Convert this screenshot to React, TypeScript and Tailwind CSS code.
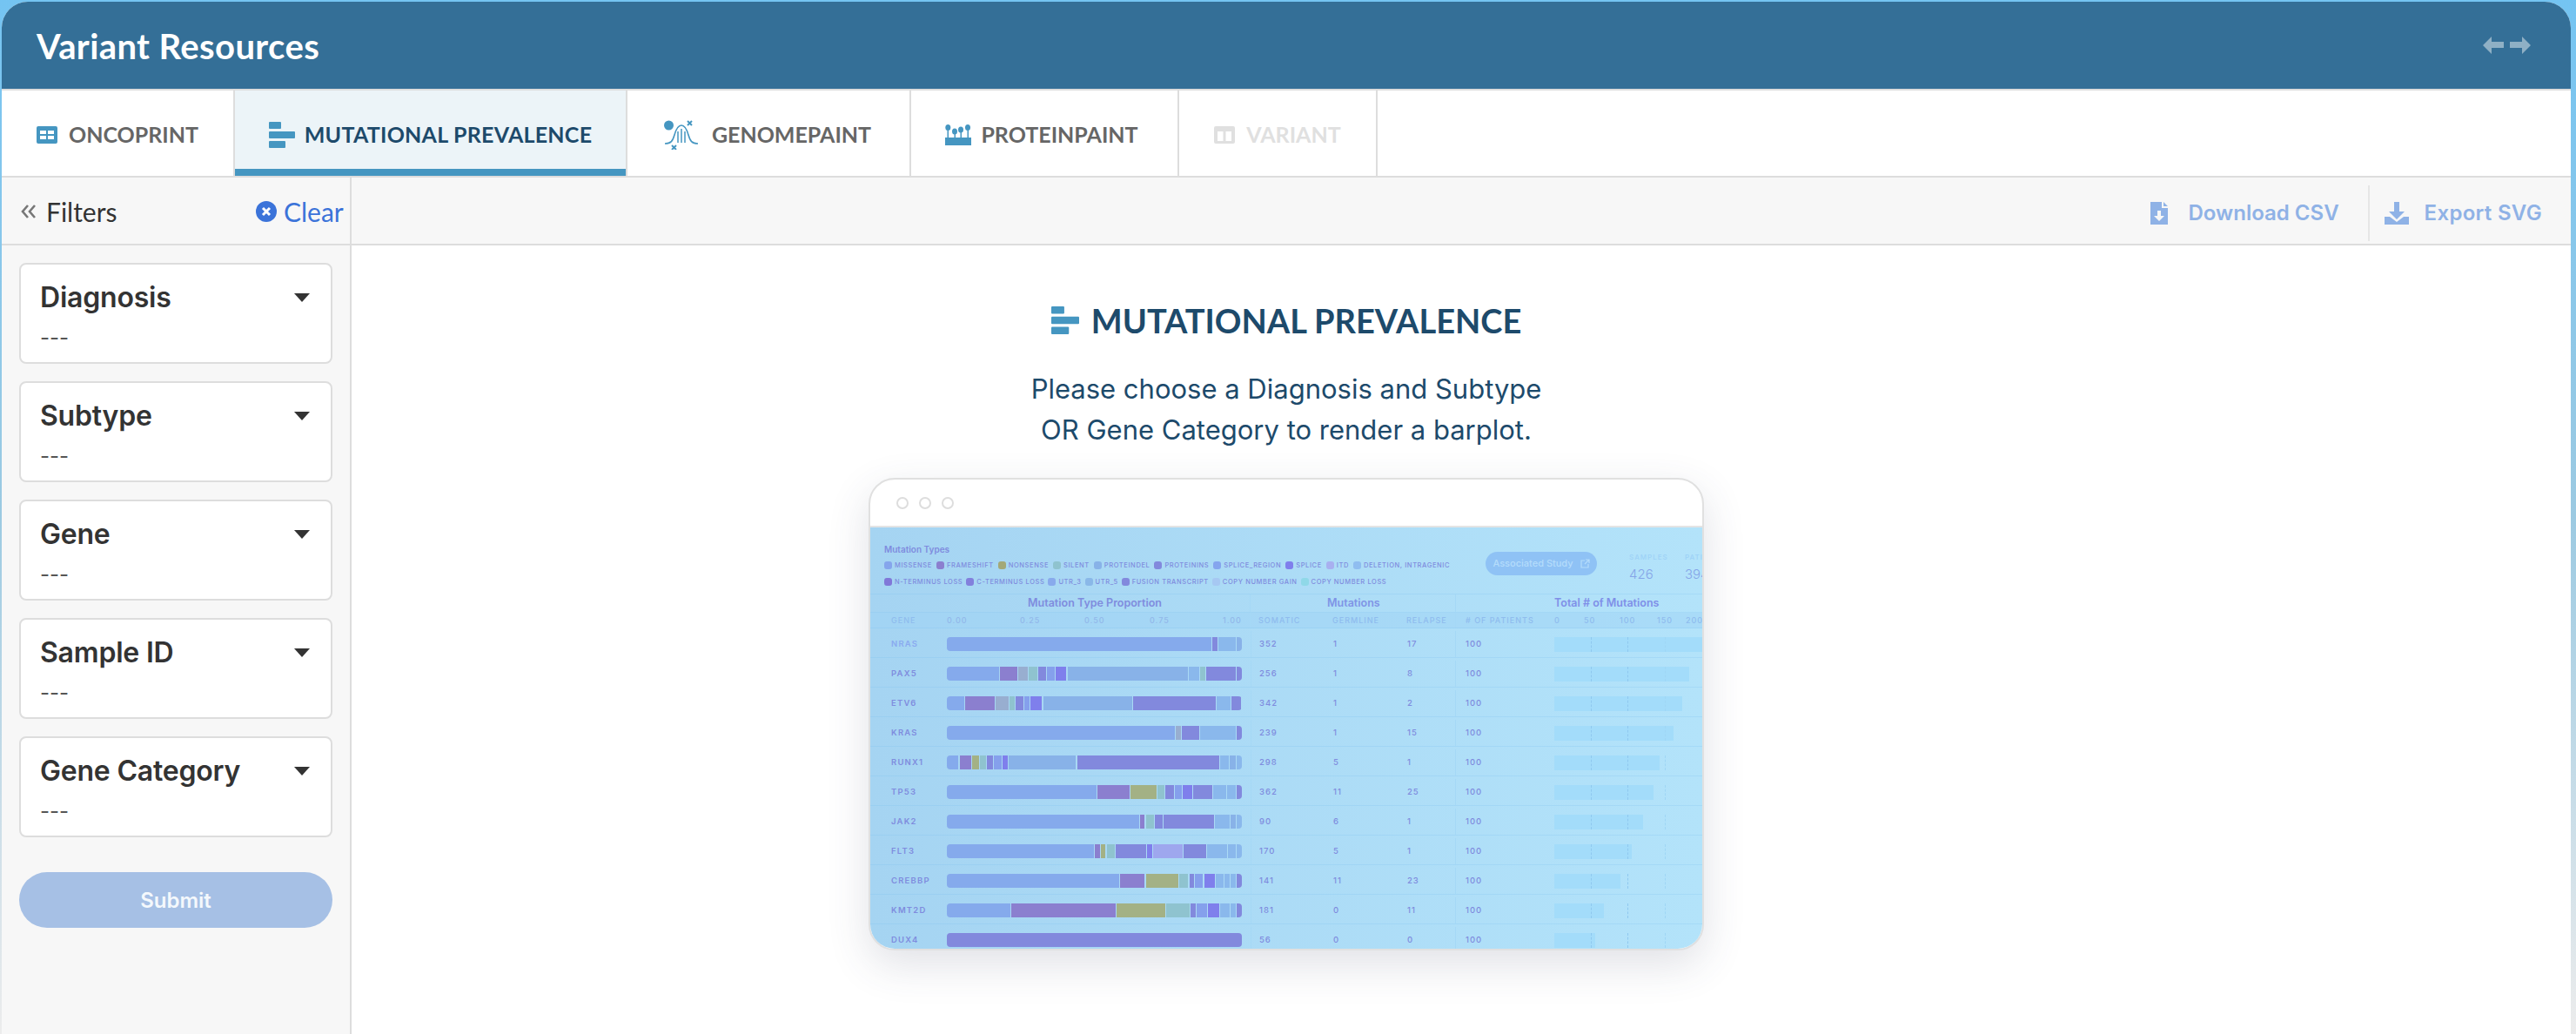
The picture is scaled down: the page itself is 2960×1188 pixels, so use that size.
import React from "react";

const c: Record<string, string> = {
  a: "#85aaec", f: "#8b7fcf", n: "#a3b185", g: "#98aed0", s: "#8fc3cf", p: "#8289dd",
  r: "#85a0ec", x: "#7f7fec", d: "#88b2e8", k: "#8ab8ec", i: "#9ea7ee",
};

type Seg = [string, number, number];
const rows: { gene: string; som: string; ger: string; rel: string; total: number; segs: Seg[] }[] = [
  { gene: "NRAS", som: "352", ger: "1", rel: "17", total: 1430, segs: [["a", 294, 1207], ["p", 1209, 1227], ["k", 1229, 1290], ["d", 1293, 1311]] },
  { gene: "PAX5", som: "256", ger: "1", rel: "8", total: 1387, segs: [["a", 294, 474], ["f", 477, 538], ["g", 541, 573], ["s", 576, 606], ["p", 609, 636], ["r", 639, 666], ["x", 669, 705], ["d", 710, 1125], ["k", 1128, 1164], ["s", 1167, 1185], ["p", 1188, 1290], ["p", 1293, 1311]] },
  { gene: "ETV6", som: "342", ger: "1", rel: "2", total: 1361, segs: [["a", 294, 355], ["f", 357, 459], ["g", 462, 507], ["s", 510, 528], ["p", 531, 558], ["r", 561, 579], ["x", 582, 621], ["d", 627, 933], ["p", 936, 1221], ["k", 1224, 1272], ["p", 1275, 1308]] },
  { gene: "KRAS", som: "239", ger: "1", rel: "15", total: 1333, segs: [["a", 294, 1080], ["g", 1083, 1101], ["p", 1104, 1164], ["k", 1167, 1290], ["p", 1293, 1311]] },
  { gene: "RUNX1", som: "298", ger: "5", rel: "1", total: 1285, segs: [["a", 294, 333], ["f", 339, 378], ["n", 381, 405], ["s", 408, 429], ["p", 432, 452], ["r", 456, 483], ["x", 486, 504], ["d", 507, 738], ["p", 744, 1233], ["k", 1236, 1266], ["d", 1269, 1290], ["k", 1293, 1311]] },
  { gene: "TP53", som: "362", ger: "11", rel: "25", total: 1263, segs: [["a", 294, 810], ["f", 813, 924], ["n", 927, 1017], ["s", 1020, 1044], ["p", 1047, 1076], ["r", 1079, 1104], ["x", 1107, 1140], ["p", 1143, 1209], ["k", 1212, 1257], ["k", 1260, 1290], ["p", 1293, 1311]] },
  { gene: "JAK2", som: "90", ger: "6", rel: "1", total: 1227, segs: [["a", 294, 957], ["f", 960, 975], ["s", 981, 1008], ["p", 1011, 1038], ["p", 1041, 1215], ["k", 1218, 1269], ["d", 1272, 1290], ["k", 1293, 1311]] },
  { gene: "FLT3", som: "170", ger: "5", rel: "1", total: 1188, segs: [["a", 294, 801], ["f", 804, 822], ["n", 825, 840], ["s", 846, 873], ["p", 876, 981], ["x", 984, 1002], ["i", 1005, 1107], ["p", 1110, 1188], ["k", 1191, 1260], ["k", 1263, 1290], ["k", 1293, 1311]] },
  { gene: "CREBBP", som: "141", ger: "11", rel: "23", total: 1148, segs: [["a", 294, 888], ["f", 891, 975], ["n", 981, 1092], ["s", 1095, 1125], ["p", 1131, 1146], ["r", 1149, 1176], ["x", 1182, 1218], ["k", 1221, 1248], ["k", 1251, 1269], ["k", 1272, 1290], ["p", 1293, 1311]] },
  { gene: "KMT2D", som: "181", ger: "0", rel: "11", total: 1092, segs: [["a", 294, 513], ["f", 516, 876], ["n", 879, 1047], ["s", 1050, 1131], ["p", 1134, 1152], ["r", 1155, 1191], ["x", 1194, 1233], ["k", 1236, 1269], ["k", 1272, 1290], ["p", 1293, 1311]] },
  { gene: "DUX4", som: "56", ger: "0", rel: "0", total: 1062, segs: [["p", 294, 1311]] },
];

const legend1: [string, string][] = [["MISSENSE", "#85a5ec"], ["FRAMESHIFT", "#8b7fcf"], ["NONSENSE", "#a3a878"], ["SILENT", "#8fc3cf"], ["PROTEINDEL", "#88b2e8"], ["PROTEININS", "#8289dd"], ["SPLICE_REGION", "#85a5ee"], ["SPLICE", "#7f7fec"], ["ITD", "#a8b0f0"], ["DELETION, INTRAGENIC", "#8fbdf0"]];
const legend2: [string, string][] = [["N-TERMINUS LOSS", "#8078d8"], ["C-TERMINUS LOSS", "#8280dc"], ["UTR_3", "#88aaec"], ["UTR_5", "#8ab8e8"], ["FUSION TRANSCRIPT", "#8289dd"], ["COPY NUMBER GAIN", "#a6c8f2"], ["COPY NUMBER LOSS", "#8fd8e8"]];

function TableIcon() {
  return (
    <svg width="24" height="20" viewBox="0 0 24 20">
      <rect width="24" height="20" rx="2" fill="#4596c1" />
      <rect x="4" y="5" width="7" height="4" fill="#fff" />
      <rect x="13" y="5" width="7" height="4" fill="#fff" />
      <rect x="4" y="11" width="7" height="4" fill="#fff" />
      <rect x="13" y="11" width="7" height="4" fill="#fff" />
    </svg>
  );
}

function BarsIcon({ w = 30, h = 30 }: { w?: number; h?: number }) {
  return (
    <svg width={w} height={h} viewBox="0 0 30 30">
      <rect x="0" y="0" width="14" height="8" rx="1" fill="#4596c1" />
      <rect x="0" y="11" width="30" height="8" rx="1" fill="#4596c1" />
      <rect x="0" y="22" width="19" height="8" rx="1" fill="#4596c1" />
    </svg>
  );
}

function GenomeIcon() {
  return (
    <svg width="40" height="34" viewBox="0 0 40 34" fill="none" stroke="#4596c1">
      <circle cx="5.5" cy="6" r="5.5" fill="#4596c1" stroke="none" />
      <path d="M1 27c7 0 9-3 11-10s4-11 8-11 6 4 8 11 4 10 11 10" strokeWidth="1.6" />
      <path d="M16 13v13M20 10v16M24 13v13" strokeWidth="1.5" />
      <path d="M27 1l5 5M32 1l-5 5M9 29l5 5M14 29l-5 5" strokeWidth="2" />
    </svg>
  );
}

function ProteinIcon() {
  return (
    <svg width="30" height="24" viewBox="0 0 30 24" fill="#4596c1">
      <rect x="0" y="15" width="30" height="9" />
      <rect x="2.5" y="4" width="1.5" height="12" />
      <ellipse cx="3.3" cy="3.5" rx="3" ry="3.5" />
      <rect x="10.5" y="9" width="1.5" height="7" />
      <ellipse cx="11" cy="8" rx="3" ry="3.5" />
      <rect x="17.5" y="7" width="1.5" height="9" />
      <ellipse cx="18" cy="6" rx="3" ry="3.5" />
      <rect x="25.5" y="4" width="1.5" height="12" />
      <ellipse cx="26" cy="3.5" rx="3" ry="3.5" />
    </svg>
  );
}

function VariantIcon() {
  return (
    <svg width="24" height="20" viewBox="0 0 24 20" className="h-[20px]">
      <rect width="24" height="20" rx="2" fill="#e0e0e0" />
      <rect x="4" y="6" width="6.5" height="11" fill="#fff" />
      <rect x="13.5" y="6" width="6.5" height="11" fill="#fff" />
    </svg>
  );
}

function Tab({ label, icon, className, textClass = "text-[#666]", gap = "gap-[13px]" }: { label: string; icon: React.ReactNode; className: string; textClass?: string; gap?: string }) {
  return (
    <div className={`relative flex h-full items-center justify-center border-r-2 border-[#ddd] pt-[3px] ${gap} ${className}`}>
      {icon}
      <span className={`font-['Lato',sans-serif] text-[25px] font-bold leading-none ${textClass}`}>{label}</span>
    </div>
  );
}

function FilterCard({ title }: { title: string }) {
  return (
    <div className="relative h-[116px] w-[360px] rounded-[8px] border-2 border-[#ddd] bg-white pl-[22px]">
      <div className="pt-[20px] text-[32px] font-semibold leading-[36px] tracking-[-0.2px] text-[#333]">{title}</div>
      <div className="mt-[16px] text-[24px] leading-[24px] text-[#555]">---</div>
      <svg width="18" height="10" viewBox="0 0 18 10" className="absolute right-[24px] top-[33px]">
        <path d="M0 0h18l-9 10z" fill="#333" />
      </svg>
    </div>
  );
}

function Preview() {
  const seps = "border-b border-[#7cc0ee]/25";
  return (
    <div className="h-[543px] w-[960px] overflow-hidden rounded-[30px] border-2 border-[#e0e0e0] bg-white shadow-[0_16px_48px_rgba(60,70,100,0.16)]">
      <div className="flex h-[55px] items-center gap-[12px] border-b-2 border-[#e4e4e4] pl-[30px]">
        <span className="size-[14px] rounded-full border-2 border-[#ddd]" />
        <span className="size-[14px] rounded-full border-2 border-[#ddd]" />
        <span className="size-[14px] rounded-full border-2 border-[#ddd]" />
      </div>
      <div className="h-[484px] w-[956px] overflow-hidden bg-gradient-to-r from-[#a5d4f2] to-[#b3e3fa] text-[#7f8cde]">
        <div className="flex h-[76px]">
          <div className="w-[690px] shrink-0 pl-[16px] pt-[19px]">
            <div className="text-[10px] font-semibold leading-[12px] text-[#7f8cde]">Mutation Types</div>
            <div className="mt-[6px] flex h-[13px] items-center gap-[5px]">
              {legend1.map(([t, col]) => (
                <span key={t} className="flex items-center gap-[3px] whitespace-nowrap text-[7.5px] font-medium tracking-[0.6px]">
                  <span className="size-[9px] rounded-[3px]" style={{ background: col }} />
                  {t}
                </span>
              ))}
            </div>
            <div className="mt-[6px] flex h-[13px] items-center gap-[4px]">
              {legend2.map(([t, col]) => (
                <span key={t} className="flex items-center gap-[3px] whitespace-nowrap text-[7.5px] font-medium tracking-[0.6px]">
                  <span className="size-[9px] rounded-[3px]" style={{ background: col }} />
                  {t}
                </span>
              ))}
            </div>
          </div>
          <div className="ml-[17px] mt-[28px] flex h-[27px] w-[128px] shrink-0 items-center justify-center gap-[8px] rounded-full bg-[#8fc2f5] text-[11px] font-medium text-[#b4dcfb]">
            Associated Study
            <svg width="11" height="11" viewBox="0 0 11 11" fill="none" stroke="#b4dcfb" strokeWidth="1.2">
              <path d="M5 2H1v8h8V6M6 1h4v4M10 1L5 6" />
            </svg>
          </div>
          <div className="ml-[37px] mt-[28px] w-[64px] shrink-0 text-[8px] font-medium leading-[12px] tracking-[1px] text-[#9ed2f7]">
            SAMPLES
            <div className="mt-[5px] text-[15px] font-light leading-[18px] tracking-normal text-[#85a5e8]">426</div>
          </div>
          <div className="mt-[28px] shrink-0 text-[8px] font-medium leading-[12px] tracking-[1px] text-[#9ed2f7]">
            PATIENTS
            <div className="mt-[5px] text-[15px] font-light leading-[18px] tracking-normal text-[#85a5e8]">394</div>
          </div>
        </div>

        <div className={`flex h-[22px] items-center border-t border-[#7cc0ee]/25 text-[12.5px] font-semibold ${seps}`}>
          <div className="flex h-full w-[437px] items-center justify-center border-r border-[#a5d8f6] pl-[80px]">Mutation Type Proportion</div>
          <div className="flex h-full w-[236px] items-center border-r border-[#a5d8f6] pl-[88px] text-[#7f94e6]">Mutations</div>
          <div className="pl-[113px] text-[#7f8fe8]">Total # of Mutations</div>
        </div>
        <div className={`flex h-[18px] items-center whitespace-nowrap bg-[#a0d4f5]/50 text-[9px] font-medium tracking-[1px] text-[#8fbcee] ${seps}`}>
          <div className="flex h-full w-[437px] shrink-0 items-center border-r border-[#a5d8f6] pl-[24px]">
            <span className="w-[64px] shrink-0">GENE</span>
            <span className="w-[84px] shrink-0 text-[#92b8ea]">0.00</span>
            <span className="w-[74px] shrink-0 text-[#92b8ea]">0.25</span>
            <span className="w-[75px] shrink-0 text-[#92b8ea]">0.50</span>
            <span className="w-[84px] shrink-0 text-[#92b8ea]">0.75</span>
            <span className="shrink-0 text-[#92b8ea]">1.00</span>
          </div>
          <div className="flex h-full w-[236px] shrink-0 items-center border-r border-[#a5d8f6] pl-[9px]">
            <span className="w-[85px] shrink-0">SOMATIC</span>
            <span className="w-[85px] shrink-0">GERMLINE</span>
            <span>RELAPSE</span>
          </div>
          <div className="w-[113px] shrink-0 pl-[11px]"># OF PATIENTS</div>
          <span className="w-[34px] shrink-0">0</span>
          <span className="w-[41px] shrink-0">50</span>
          <span className="w-[43px] shrink-0">100</span>
          <span className="w-[33px] shrink-0">150</span>
          <span className="shrink-0">200</span>
        </div>

        {rows.map((r, idx) => (
          <div key={r.gene} className={`flex h-[34px] items-center pt-[3px] text-[9.5px] font-medium tracking-[1px] ${seps}`}>
            <div className={`w-[88px] shrink-0 pl-[24px] text-[9.5px] font-semibold tracking-[1.2px] ${idx === 0 ? "text-[#8aaaf0]" : "text-[#7f8cde]"}`}>{r.gene}</div>
            <div className="flex h-[16px] w-[339px] shrink-0 overflow-hidden rounded-[4px]">
              {r.segs.map(([k, s, e], i) => (
                <div
                  key={i}
                  className="h-full shrink-0"
                  style={{
                    background: c[k],
                    width: (e - s) / 3,
                    marginLeft: i === 0 ? 0 : (s - r.segs[i - 1][2]) / 3,
                  }}
                />
              ))}
            </div>
            <div className="ml-[10px] flex h-[30px] w-[236px] shrink-0 items-center border-x border-[#a5d8f6] pl-[9px]">
              <span className="w-[85px]">{r.som}</span>
              <span className="w-[85px]">{r.ger}</span>
              <span>{r.rel}</span>
            </div>
            <div className="w-[113px] shrink-0 pl-[11px]">100</div>
            <div className="relative h-[17px] w-[170px] shrink-0">
              <div className="h-full bg-[#a3dcfa]" style={{ width: (r.total - 921) / 3 }} />
              <span className="absolute left-[42px] top-0 h-full border-l border-dashed border-[#8fc8ef]" />
              <span className="absolute left-[84px] top-0 h-full border-l border-dashed border-[#8fc8ef]" />
              <span className="absolute left-[127px] top-0 h-full border-l border-dashed border-[#9fd6f5]" />
            </div>
          </div>
        ))}
      </div>
    </div>
  );
}

export default function App() {
  return (
    <div className="h-[1188px] w-[2960px] overflow-hidden bg-gradient-to-b from-[#74c4f2] via-[#9ccae2] to-[#ececec] pl-[2px] pr-[6px] pt-[2px] font-['Inter',sans-serif]">
      <div className="flex h-[1186px] flex-col overflow-hidden rounded-t-[30px] bg-white">
        <header className="flex h-[100px] shrink-0 items-center justify-between bg-[#346f97] pl-[40px] pr-[46px]">
          <h1 className="pt-[2px] font-['Lato',sans-serif] text-[40px] font-bold leading-none tracking-[0.4px] text-white">Variant Resources</h1>
          <svg width="55" height="20" viewBox="0 0 55 20" fill="#8fb0c5">
            <path d="M0 10L10 0v6h14v7H10v7zM55 10L45 0v6H31v7h14v7z" />
          </svg>
        </header>

        <nav className="flex h-[102px] shrink-0 border-y-2 border-[#ddd] bg-white">
          <Tab label="ONCOPRINT" icon={<TableIcon />} className="w-[268px]" />
          <div className="relative flex h-full w-[451px] items-center justify-center gap-[11px] border-r-2 border-[#ddd] bg-[#ecf4f8] pt-[3px]">
            <BarsIcon />
            <span className="font-['Lato',sans-serif] text-[25px] font-bold leading-none tracking-[0.25px] text-[#1d4a6b]">MUTATIONAL PREVALENCE</span>
            <span className="absolute inset-x-0 bottom-0 h-[8px] bg-[#4596c1]" />
          </div>
          <Tab label="GENOMEPAINT" icon={<GenomeIcon />} className="w-[326px] pr-[2px]" gap="gap-[15px]" />
          <Tab label="PROTEINPAINT" icon={<ProteinIcon />} className="w-[308px] pr-[6px]" gap="gap-[11px]" />
          <Tab label="VARIANT" icon={<VariantIcon />} className="w-[228px]" textClass="text-[#e0e0e0]" />
        </nav>

        <div className="flex min-h-0 flex-1">
          <aside className="flex w-[402px] shrink-0 flex-col border-r-2 border-[#ddd] bg-[#f7f7f7]">
            <div className="flex h-[78px] shrink-0 items-center border-b-2 border-[#ddd] pl-[22px] pt-[2px] text-[30px]">
              <svg width="18" height="16" viewBox="0 0 18 16" fill="none" stroke="#777" strokeWidth="2.6">
                <path d="M8 1L2 8l6 7M16 1l-6 7 6 7" />
              </svg>
              <span className="ml-[11px] w-[241px] shrink-0 font-['Lato',sans-serif] text-[#333]">Filters</span>
              <svg width="24" height="24" viewBox="0 0 24 24" className="shrink-0">
                <circle cx="12" cy="12" r="12" fill="#3b73d9" />
                <path d="M8 8l8 8M16 8l-8 8" stroke="#fff" strokeWidth="3" />
              </svg>
              <span className="ml-[8px] font-['Lato',sans-serif] text-[#3b73d9]">Clear</span>
            </div>
            <div className="flex flex-col gap-[20px] pl-[20px] pt-[20px]">
              <FilterCard title="Diagnosis" />
              <FilterCard title="Subtype" />
              <FilterCard title="Gene" />
              <FilterCard title="Sample ID" />
              <FilterCard title="Gene Category" />
              <button className="mt-[20px] flex h-[64px] w-[360px] items-center justify-center rounded-full bg-[#a6c0e5] pt-[2px] text-[24px] font-semibold text-[#f4f8fc]">
                Submit
              </button>
            </div>
          </aside>

          <main className="flex min-w-0 flex-1 flex-col">
            <div className="flex h-[78px] shrink-0 items-center justify-end border-b-2 border-[#ddd] bg-[#f7f7f7] pr-[33px] pt-[5px] text-[24px] font-semibold text-[#8fb2e6]">
              <svg width="20" height="26" viewBox="0 0 20 26" fill="#8fb2e6">
                <path d="M0 0h13v7h7v19H0zM15 0l5 5h-5z" />
                <path d="M8 10h4v6h4l-6 6-6-6h4z" fill="#f7f7f7" />
              </svg>
              <span className="ml-[24px]">Download CSV</span>
              <span className="ml-[33px] h-[64px] w-[2px] bg-[#e6e6e6]" />
              <svg width="28" height="26" viewBox="0 0 28 26" fill="#8fb2e6" className="ml-[17px]">
                <path d="M11 0h6v11h6l-9 9-9-9h6z" />
                <path d="M0 17h6l8 6 8-6h6v9H0z" />
              </svg>
              <span className="ml-[18px] tracking-[0.3px]">Export SVG</span>
            </div>

            <div className="flex flex-1 flex-col items-center bg-white pr-[402px] pt-[69px]">
              <div className="flex h-[34px] items-center gap-[14px]">
                <BarsIcon w={32} h={32} />
                <h2 className="font-['Lato',sans-serif] text-[38px] font-bold leading-none text-[#1d4a6b]">MUTATIONAL PREVALENCE</h2>
              </div>
              <p className="mt-[38px] text-center text-[31px] font-normal leading-[47px] text-[#1d4a6b]">
                Please choose a Diagnosis and Subtype
                <br />
                OR Gene Category to render a barplot.
              </p>
              <div className="mt-[32px]">
                <Preview />
              </div>
            </div>
          </main>
        </div>
      </div>
    </div>
  );
}
